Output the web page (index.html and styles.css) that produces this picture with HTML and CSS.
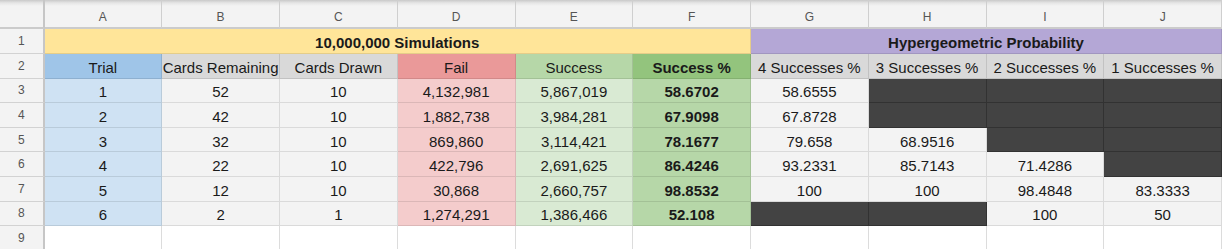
FILE: index.html
```html
<!DOCTYPE html>
<html>
<head>
<meta charset="utf-8">
<link rel="stylesheet" href="styles.css">
</head>
<body>
<div class="sheet">
  <div class="ch corner"></div>
  <div class="ch">A</div><div class="ch">B</div><div class="ch">C</div><div class="ch">D</div><div class="ch">E</div>
  <div class="ch">F</div><div class="ch">G</div><div class="ch">H</div><div class="ch">I</div><div class="ch">J</div>

  <div class="rh">1</div>
  <div class="c title yellow span6">10,000,000 Simulations</div>
  <div class="c title purple span4">Hypergeometric Probability</div>

  <div class="rh">2</div>
  <div class="c blue-h">Trial</div>
  <div class="c gray-h">Cards Remaining</div>
  <div class="c gray-h">Cards Drawn</div>
  <div class="c red-h">Fail</div>
  <div class="c green-h">Success</div>
  <div class="c dgreen-h b">Success %</div>
  <div class="c gray-h">4 Successes %</div>
  <div class="c gray-h">3 Successes %</div>
  <div class="c gray-h">2 Successes %</div>
  <div class="c gray-h">1 Successes %</div>

  <div class="rh">3</div>
  <div class="c blue">1</div><div class="c">52</div><div class="c">10</div>
  <div class="c red">4,132,981</div><div class="c green">5,867,019</div><div class="c dgreen b">58.6702</div>
  <div class="c">58.6555</div><div class="c dark"></div><div class="c dark"></div><div class="c dark"></div>

  <div class="rh">4</div>
  <div class="c blue">2</div><div class="c">42</div><div class="c">10</div>
  <div class="c red">1,882,738</div><div class="c green">3,984,281</div><div class="c dgreen b">67.9098</div>
  <div class="c">67.8728</div><div class="c dark"></div><div class="c dark"></div><div class="c dark"></div>

  <div class="rh">5</div>
  <div class="c blue">3</div><div class="c">32</div><div class="c">10</div>
  <div class="c red">869,860</div><div class="c green">3,114,421</div><div class="c dgreen b">78.1677</div>
  <div class="c">79.658</div><div class="c">68.9516</div><div class="c dark"></div><div class="c dark"></div>

  <div class="rh">6</div>
  <div class="c blue">4</div><div class="c">22</div><div class="c">10</div>
  <div class="c red">422,796</div><div class="c green">2,691,625</div><div class="c dgreen b">86.4246</div>
  <div class="c">93.2331</div><div class="c">85.7143</div><div class="c">71.4286</div><div class="c dark"></div>

  <div class="rh">7</div>
  <div class="c blue">5</div><div class="c">12</div><div class="c">10</div>
  <div class="c red">30,868</div><div class="c green">2,660,757</div><div class="c dgreen b">98.8532</div>
  <div class="c">100</div><div class="c">100</div><div class="c">98.4848</div><div class="c">83.3333</div>

  <div class="rh">8</div>
  <div class="c blue">6</div><div class="c">2</div><div class="c">1</div>
  <div class="c red">1,274,291</div><div class="c green">1,386,466</div><div class="c dgreen b">52.108</div>
  <div class="c dark"></div><div class="c dark"></div><div class="c">100</div><div class="c">50</div>

  <div class="rh">9</div>
  <div class="c empty"></div><div class="c empty"></div><div class="c empty"></div><div class="c empty"></div><div class="c empty"></div>
  <div class="c empty"></div><div class="c empty"></div><div class="c empty"></div><div class="c empty"></div><div class="c empty"></div>
</div>
</body>
</html>
```

FILE: styles.css
```css
* { box-sizing: border-box; }
html, body { margin: 0; padding: 0; background: #ffffff; }
body { font-family: "Liberation Sans", Arial, sans-serif; overflow: hidden; }

.sheet {
  width: 1222px;
  display: grid;
  grid-template-columns: 44.5px repeat(10, 1fr);
  grid-template-rows: 29.3px repeat(9, 24.63px);
}

.ch {
  background: linear-gradient(#c9c9c9 0px, #e6e6e6 3px, #f3f3f3 6px, #f3f3f3 100%);
  color: #555;
  font-size: 12px;
  display: flex;
  align-items: center;
  justify-content: center;
  padding-top: 6px;
  border-right: 1px solid #cfcfcf;
  border-bottom: 2px solid #cbcbcb;
}
.ch.corner { border-right: 2px solid #c6c6c6; }

.rh {
  background: #f3f3f3;
  color: #555;
  font-size: 12px;
  display: flex;
  align-items: center;
  justify-content: center;
  border-right: 2px solid #c6c6c6;
  border-bottom: 1px solid #d2d2d2;
}

.c {
  background: #f3f3f3;
  color: #1a1a1a;
  font-size: 15px;
  display: flex;
  align-items: center;
  justify-content: center;
  padding-top: 3px;
  white-space: nowrap;
  overflow: hidden;
  border-right: 1px solid rgba(0, 0, 0, 0.1);
  border-bottom: 1px solid rgba(0, 0, 0, 0.1);
}
.b { font-weight: bold; }
.title { font-weight: bold; padding-top: 2px; }
.span6 { grid-column: span 6; }
.span4 { grid-column: span 4; }

.yellow { background: #ffe599; }
.purple { background: #b4a7d6; }
.blue-h { background: #9fc5e8; }
.blue { background: #cfe2f3; }
.gray-h { background: #d9d9d9; }
.red-h { background: #ea9999; }
.red { background: #f4cccc; }
.green-h { background: #b6d7a8; }
.green { background: #d9ead3; }
.dgreen-h { background: #93c47d; }
.dgreen { background: #b6d7a8; }
.dark { background: #434343; border-color: rgba(0, 0, 0, 0.25); }
.empty { background: #ffffff; border-bottom: none; border-right: 1px solid #dcdcdc; }
```
